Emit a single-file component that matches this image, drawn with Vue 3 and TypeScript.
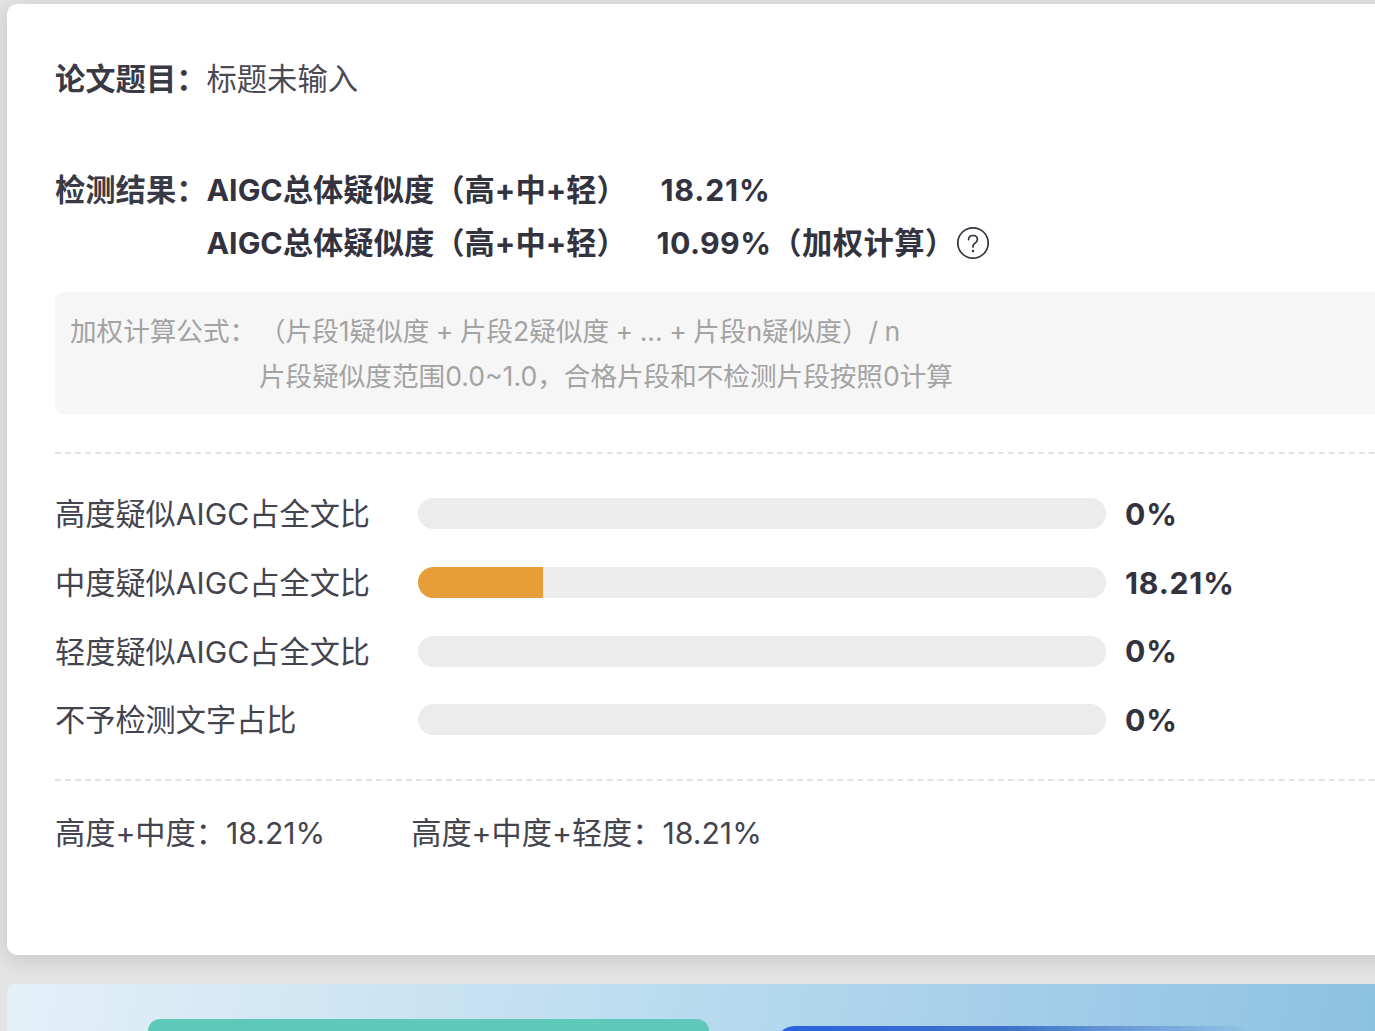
<template>
  <div class="page">
    <div class="card">
      <div class="title-row">
        <span class="label">论文题目&#xFF1A;</span>
        <span class="title-text">标题未输入</span>
      </div>

      <div class="result">
        <span class="label">检测结果&#xFF1A;</span>
        <div class="result-lines">
          <div class="result-line">
            <span class="result-name">AIGC总体疑似度&#xFF08;高+中+轻&#xFF09;</span>
            <span class="score-a">18.21%</span>
          </div>
          <div class="result-line">
            <span class="result-name">AIGC总体疑似度&#xFF08;高+中+轻&#xFF09;</span>
            <span class="score-b">10.99%&#xFF08;加权计算&#xFF09;</span>
            <svg class="help" width="34" height="34" viewBox="0 0 34 34" fill="none">
              <circle cx="17" cy="17" r="15.2" stroke="#33333f" stroke-width="1.7" />
              <path d="M12.6 13.6c0-2.5 1.9-4.1 4.4-4.1s4.4 1.6 4.4 3.9c0 1.8-1 2.7-2.4 3.7-1.3.9-2 1.6-2 3.2v.7" stroke="#33333f" stroke-width="1.7" stroke-linecap="round" />
              <circle cx="17" cy="25" r="1.2" fill="#33333f" />
            </svg>
          </div>
        </div>
      </div>

      <div class="formula">
        <div class="formula-line">
          <span class="formula-label">加权计算公式&#xFF1A;</span>
          <span class="formula-main">&#xFF08;片段1疑似度 + 片段2疑似度 + ... + 片段n疑似度&#xFF09;/ n</span>
        </div>
        <div class="formula-note">片段疑似度范围0.0~1.0&#xFF0C;合格片段和不检测片段按照0计算</div>
      </div>

      <div class="bars">
        <div v-for="row in rows" :key="row.name" class="bar-row">
          <span class="bar-name">{{ row.name }}</span>
          <div class="track">
            <div class="fill" :style="{ width: row.percent + '%' }"></div>
          </div>
          <span class="bar-value">{{ row.percent }}%</span>
        </div>
      </div>

      <div class="totals">
        <span>高度+中度&#xFF1A;18.21%</span>
        <span>高度+中度+轻度&#xFF1A;18.21%</span>
      </div>
    </div>

    <div class="banner">
      <div class="btn-teal"></div>
      <div class="btn-blue"></div>
    </div>
  </div>
</template>

<script setup lang="ts">
interface BarRow {
  name: string
  percent: number
}

const rows: BarRow[] = [
  { name: '高度疑似AIGC占全文比', percent: 0 },
  { name: '中度疑似AIGC占全文比', percent: 18.21 },
  { name: '轻度疑似AIGC占全文比', percent: 0 },
  { name: '不予检测文字占比', percent: 0 }
]
</script>

<style>
html,
body {
  margin: 0;
  overflow: hidden;
  background: #e4e4e4;
}
</style>

<style scoped>
.page {
  width: 1375px;
  height: 1031px;
  box-sizing: border-box;
  padding: 4px 0 0 7px;
  overflow: hidden;
  background: #e4e4e4;
  font-family: Inter, "Noto Sans CJK SC", sans-serif;
  color: #33333f;
}

.card {
  width: 1420px;
  height: 951px;
  box-sizing: border-box;
  padding: 55px 0 0 48px;
  background: #fff;
  border-radius: 10px;
  box-shadow: 0 4px 22px rgba(0, 0, 0, 0.14);
}

.title-row {
  display: flex;
  height: 40px;
  line-height: 40px;
  font-size: 30.3px;
}

.label {
  width: 151.5px;
  flex: none;
  white-space: nowrap;
  font-weight: 700;
  font-size: 30.3px;
  color: #3a3a46;
}

.title-text {
  color: #4a4a55;
  font-weight: 400;
}

.result {
  display: flex;
  margin-top: 71px;
  line-height: 40px;
}

.result-lines {
  display: flex;
  flex-direction: column;
  gap: 13px;
  font-size: 30.3px;
  font-weight: 700;
}

.result-line {
  display: flex;
  align-items: center;
  height: 40px;
}

.result-name {
  width: 454px;
  flex: none;
  white-space: nowrap;
}

.score-a {
  letter-spacing: 0.8px;
}

.score-b {
  margin-left: -4px;
  letter-spacing: 0.4px;
  white-space: nowrap;
}

.help {
  margin-left: 0;
}

.formula {
  width: 1400px;
  height: 122px;
  box-sizing: border-box;
  margin-top: 29px;
  padding: 17px 0 0 15px;
  background: #f6f6f6;
  border-radius: 8px;
  color: #a3a3a3;
  font-size: 26.6px;
  line-height: 45px;
}

.formula-line {
  display: flex;
}

.formula-label {
  width: 189px;
  flex: none;
  white-space: nowrap;
}

.formula-main {
  word-spacing: -1px;
}

.formula-note {
  padding-left: 189px;
}

.bars {
  display: flex;
  flex-direction: column;
  gap: 37.67px;
  width: 1400px;
  box-sizing: border-box;
  margin-top: 38px;
  padding: 44.4px 0 43.6px;
  border-top: 2px dashed #e2e2e2;
  border-bottom: 2px dashed #e2e2e2;
}

.bar-row {
  display: flex;
  align-items: center;
  height: 31px;
  font-size: 30.2px;
}

.bar-name {
  width: 363px;
  flex: none;
  padding-bottom: 3px;
  white-space: nowrap;
  color: #44444f;
}

.track {
  width: 688px;
  height: 31px;
  flex: none;
  overflow: hidden;
  border-radius: 16px;
  background: #ececec;
}

.fill {
  height: 100%;
  background: #e79d38;
}

.bar-value {
  margin-left: 19px;
  font-weight: 700;
  letter-spacing: 0.8px;
}

.totals {
  display: flex;
  gap: 86px;
  margin-top: 32px;
  font-size: 30.2px;
  line-height: 40px;
  color: #44444f;
}

.banner {
  position: relative;
  width: 1420px;
  height: 60px;
  margin-top: 29px;
  border-radius: 8px 8px 0 0;
  background: linear-gradient(100deg, #e4f0f8 0%, #bcdcef 45%, #88bfe1 100%);
}

.btn-teal {
  position: absolute;
  top: 35px;
  left: 141px;
  width: 561px;
  height: 40px;
  border-radius: 12px;
  background: #5ec8ba;
}

.btn-blue {
  position: absolute;
  top: 42px;
  left: 768px;
  width: 480px;
  height: 40px;
  border-radius: 20px;
  background: linear-gradient(90deg, #2a62e0 0%, #3f73c9 50%, rgba(100, 150, 200, 0) 100%);
}
</style>
